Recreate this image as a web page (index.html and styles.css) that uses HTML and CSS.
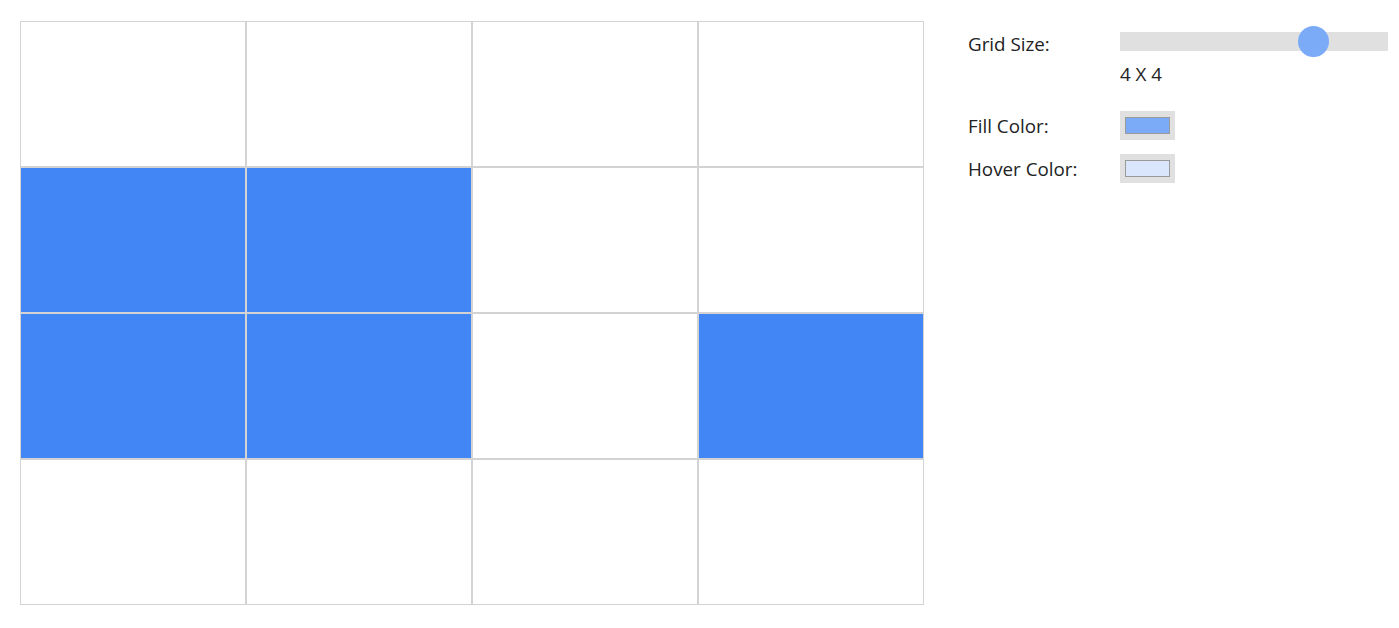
FILE: index.html
```html
<!DOCTYPE html>
<html lang="en">
<head>
<meta charset="utf-8">
<title>Grid Painter</title>
<link rel="stylesheet" href="styles.css">
</head>
<body>
<div class="app">
  <div class="board">
    <div class="cell"></div><div class="cell"></div><div class="cell"></div><div class="cell"></div>
    <div class="cell filled"></div><div class="cell filled"></div><div class="cell"></div><div class="cell"></div>
    <div class="cell filled"></div><div class="cell filled"></div><div class="cell"></div><div class="cell filled"></div>
    <div class="cell"></div><div class="cell"></div><div class="cell"></div><div class="cell"></div>
  </div>
  <div class="panel">
    <div class="row row-size">
      <div class="label">Grid Size:</div>
      <div class="control">
        <div class="slider"><div class="thumb"></div></div>
        <div class="value">4 X 4</div>
      </div>
    </div>
    <div class="row row-fill">
      <div class="label">Fill Color:</div>
      <div class="swatch-box"><div class="swatch fill"></div></div>
    </div>
    <div class="row row-hover">
      <div class="label">Hover Color:</div>
      <div class="swatch-box"><div class="swatch hover"></div></div>
    </div>
  </div>
</div>
</body>
</html>
```
FILE: styles.css
```css
html, body {
  margin: 0;
  padding: 0;
  background: #ffffff;
}
body {
  font-family: "Open Sans", "Noto Sans", sans-serif;
  font-size: 18.8px;
  color: #222222;
}
.app {
  display: flex;
  align-items: flex-start;
  padding: 21px 0 0 20px;
  gap: 44px;
}
.board {
  display: grid;
  grid-template-columns: repeat(4, 226px);
  grid-template-rows: repeat(4, 146px);
}
.cell {
  box-sizing: border-box;
  border: 1px solid #d3d3d3;
  background: #ffffff;
}
.cell.filled {
  background: #4285f4;
}
.panel {
  margin-top: 11px;
  display: flex;
  flex-direction: column;
}
.row {
  display: flex;
}
.label {
  width: 152px;
  line-height: 24px;
}
.row-fill, .row-hover {
  align-items: center;
}
.row-fill {
  margin-top: 25px;
}
.row-hover {
  margin-top: 14px;
}
.control {
  display: flex;
  flex-direction: column;
}
.slider {
  position: relative;
  width: 268px;
  height: 19px;
  background: #e0e0e0;
}
.thumb {
  position: absolute;
  left: 178px;
  top: -6px;
  width: 31px;
  height: 31px;
  border-radius: 50%;
  background: #7baaf7;
}
.value {
  margin-top: 11px;
  line-height: 24px;
}
.swatch-box {
  box-sizing: border-box;
  width: 55px;
  height: 29px;
  padding: 6px 5px 6px 5px;
  background: #e0e0e0;
}
.swatch {
  box-sizing: border-box;
  width: 45px;
  height: 17px;
  border: 1px solid #9a9a9a;
}
.swatch.fill {
  background: #7baaf7;
}
.swatch.hover {
  background: #d9e6fc;
}
```
